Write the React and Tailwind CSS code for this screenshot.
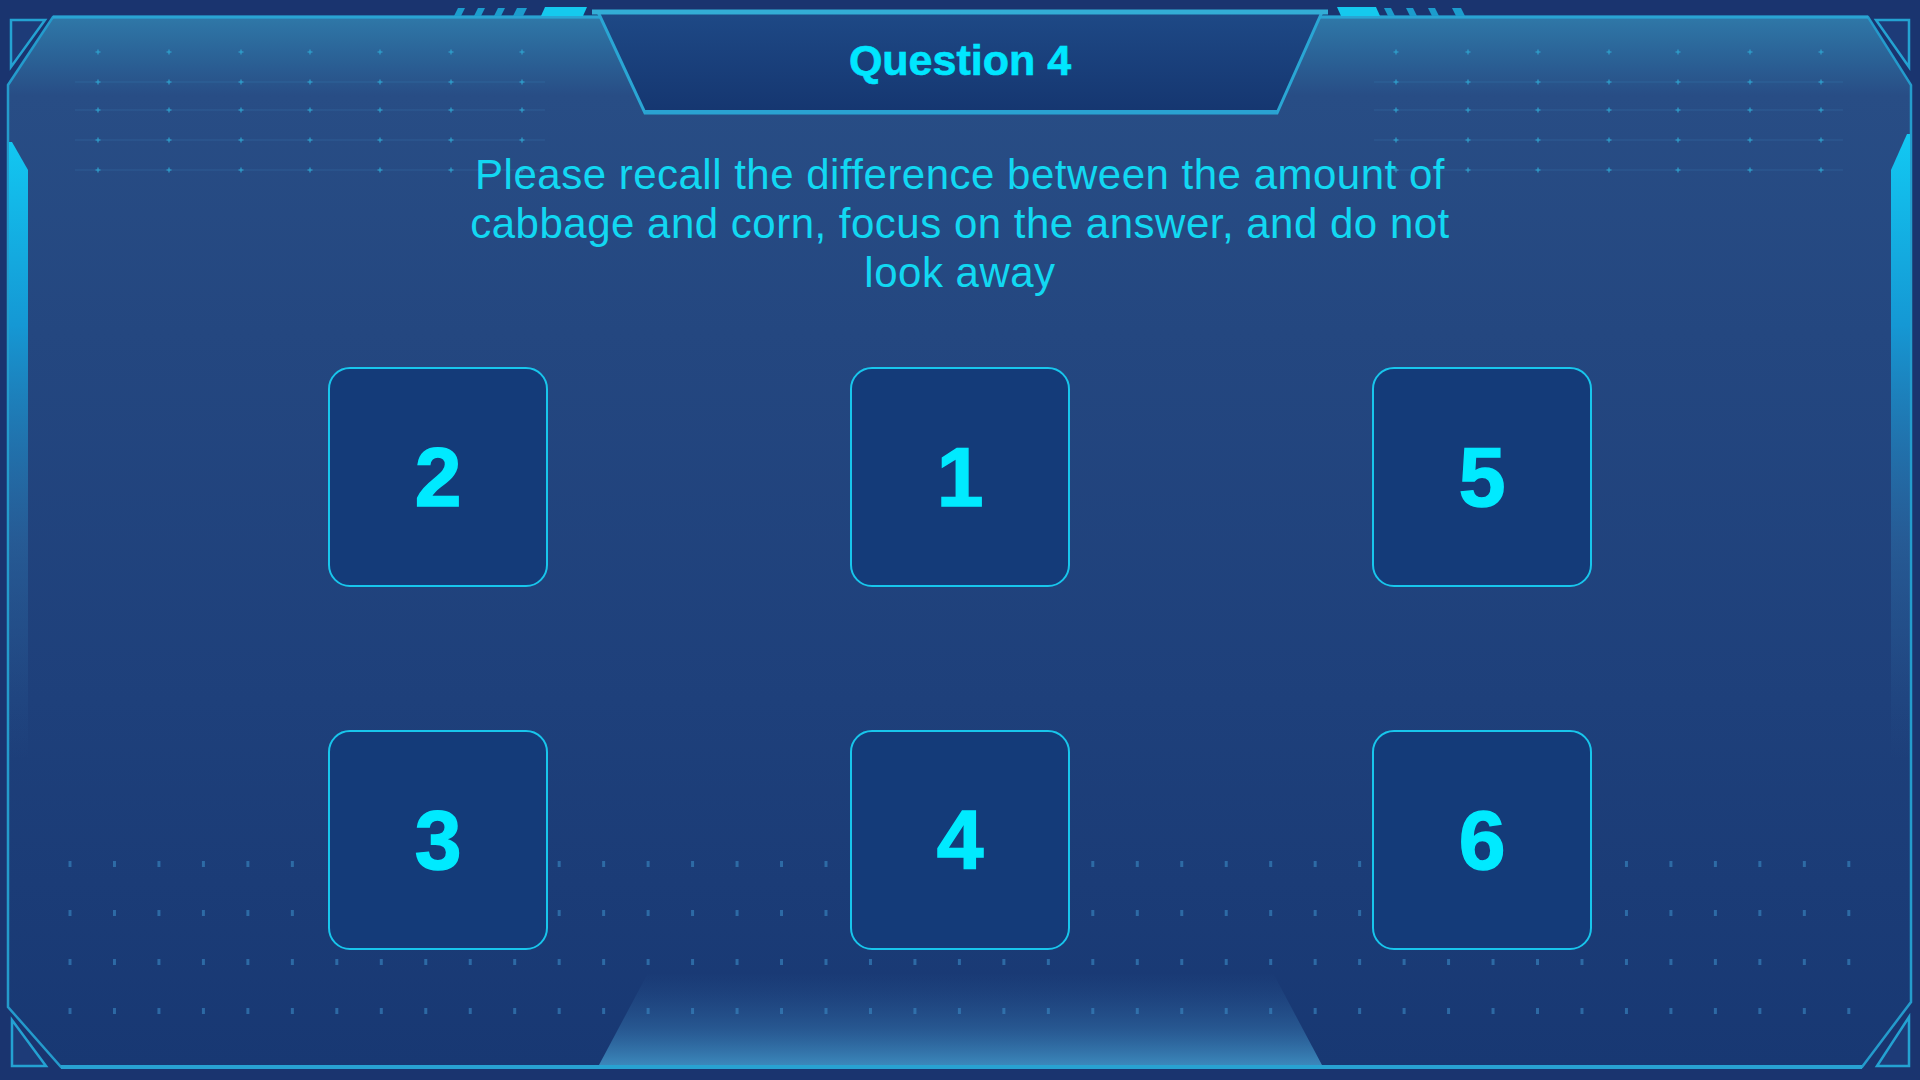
import React from "react";

function Frame() {
  const topRows = [52, 82, 110, 140, 170];
  const leftCols = [98, 169, 241, 310, 380, 451, 522];
  const rightCols = [1396, 1468, 1538, 1609, 1678, 1750, 1821];
  const botRows = [864, 913, 962, 1011];
  const botCols = Array.from({ length: 41 }, (_, i) => 70 + i * 44.47);

  return (
    <svg
      className="absolute inset-0 pointer-events-none"
      width="1920"
      height="1080"
      viewBox="0 0 1920 1080"
    >
      <defs>
        <linearGradient id="panelG" gradientUnits="userSpaceOnUse" x1="0" y1="17" x2="0" y2="1067">
          <stop offset="0" stopColor="#2f78a8" />
          <stop offset="0.035" stopColor="#2b6498" />
          <stop offset="0.075" stopColor="#284d85" />
          <stop offset="0.3" stopColor="#244780" />
          <stop offset="0.65" stopColor="#1e407b" />
          <stop offset="1" stopColor="#183873" />
        </linearGradient>
        <linearGradient id="headG" x1="0" y1="0" x2="0" y2="1">
          <stop offset="0" stopColor="#1e4986" />
          <stop offset="1" stopColor="#153670" />
        </linearGradient>
        <linearGradient id="leftBar" gradientUnits="userSpaceOnUse" x1="0" y1="138" x2="0" y2="760">
          <stop offset="0" stopColor="#12c8f2" />
          <stop offset="0.3" stopColor="#1598d4" />
          <stop offset="0.65" stopColor="#2a6aa4" stopOpacity="0.6" />
          <stop offset="1" stopColor="#2a5a95" stopOpacity="0" />
        </linearGradient>
        <linearGradient id="botTrap" x1="0" y1="0" x2="0" y2="1">
          <stop offset="0" stopColor="#2a5a95" stopOpacity="0" />
          <stop offset="0.6" stopColor="#3370a8" stopOpacity="0.55" />
          <stop offset="1" stopColor="#3d8cbf" stopOpacity="0.95" />
        </linearGradient>
      </defs>

      <rect x="0" y="0" width="1920" height="1080" fill="#1a346f" />

      {/* main panel */}
      <polygon
        points="53,17 1868,17 1911,85 1911,1002 1862,1067 61,1067 8,1007 8,85"
        fill="url(#panelG)"
        stroke="#249bcc"
        strokeWidth="2.5"
      />
      <line x1="61" y1="1067" x2="1862" y2="1067" stroke="#28a2d2" strokeWidth="4" />
      <line x1="53" y1="17" x2="1868" y2="17" stroke="#2aa4d3" strokeWidth="3" />

      {/* side glow bars */}
      <polygon points="9,142 12,142 28,170 28,760 9,760" fill="url(#leftBar)" />
      <polygon points="1910,134 1907,134 1891,170 1891,760 1910,760" fill="url(#leftBar)" />

      {/* corner triangles */}
      <polygon points="11,20 45,20 11,67" fill="#1d3b78" stroke="#24a2d2" strokeWidth="2.5" />
      <polygon points="1876,20 1909,20 1909,67" fill="#1d3b78" stroke="#24a2d2" strokeWidth="2.5" />
      <polygon points="12,1020 12,1066 46,1066" fill="#1d3b78" stroke="#24a2d2" strokeWidth="2.5" />
      <polygon points="1877,1066 1909,1066 1909,1017" fill="#1d3b78" stroke="#24a2d2" strokeWidth="2.5" />

      {/* top dot grids */}
      {topRows.map((y, ri) => (
        <g key={"tr" + y}>
          {ri > 0 && (
            <>
              <line x1="75" y1={y} x2="545" y2={y} stroke="#3a86bd" strokeOpacity="0.3" strokeWidth="1" />
              <line x1="1374" y1={y} x2="1843" y2={y} stroke="#3a86bd" strokeOpacity="0.3" strokeWidth="1" />
            </>
          )}
          {leftCols.concat(rightCols).map((x) => (
            <g key={x} stroke="#2fa6d2" strokeOpacity="0.55" strokeWidth="2">
              <line x1={x - 2.5} y1={y} x2={x + 2.5} y2={y} />
              <line x1={x} y1={y - 2.5} x2={x} y2={y + 2.5} />
            </g>
          ))}
        </g>
      ))}

      {/* bottom trapezoid */}
      <polygon points="648,973 1273,973 1322,1065 599,1065" fill="url(#botTrap)" />

      {/* bottom dots */}
      {botRows.map((y) =>
        botCols.map((x) => (
          <rect key={y + "-" + x} x={x - 1.5} y={y - 3} width="3" height="6" fill="#3a8ac4" fillOpacity="0.6" />
        ))
      )}

      {/* header trapezoid */}
      <polygon points="598,12 1322,12 1277,113 645,113" fill="url(#headG)" stroke="#2aa6d4" strokeWidth="3" />
      <line x1="592" y1="12" x2="1328" y2="12" stroke="#33add6" strokeWidth="5" />
      <line x1="645" y1="112" x2="1277" y2="112" stroke="#2aa2d2" strokeWidth="4" />

      {/* top stripes left */}
      <g fill="#1c9ccd">
        <polygon points="454,16 458,8 465,8 461,16" />
        <polygon points="474,16 478,8 485,8 481,16" />
        <polygon points="494,16 498,8 505,8 501,16" />
        <polygon points="513,16 517,8 527,8 523,16" />
      </g>
      <polygon points="541,16 545,7 587,7 583,16" fill="#15c9ee" />
      {/* top stripes right */}
      <polygon points="1337,7 1376,7 1380,16 1341,16" fill="#15c9ee" />
      <g fill="#1c9ccd">
        <polygon points="1384,8 1391,8 1395,16 1388,16" />
        <polygon points="1406,8 1413,8 1417,16 1410,16" />
        <polygon points="1428,8 1435,8 1439,16 1432,16" />
        <polygon points="1452,8 1461,8 1465,16 1456,16" />
      </g>
    </svg>
  );
}

const answers = ["2", "1", "5", "3", "4", "6"];

export default function App() {
  return (
    <div className="relative w-[1920px] h-[1080px] overflow-hidden bg-[#1a346f] font-['Liberation_Sans',Arial,sans-serif]">
      <Frame />
      <div className="relative z-10 flex flex-col items-center w-full">
        <div className="pt-[39px] text-[43px] leading-[43px] font-bold text-[#00e6ff] [-webkit-text-stroke:0.6px_#00e6ff]">
          Question 4
        </div>
        <p className="mt-[68px] w-[1010px] text-center text-[42px] leading-[49px] tracking-[0.5px] text-[#12d8f2]">
          Please recall the difference between the amount of cabbage and corn, focus on the answer, and do not look away
        </p>
        <div className="mt-[70px] grid grid-cols-[220px_220px_220px] gap-x-[302px] gap-y-[143px]">
          {answers.map((a) => (
            <button
              key={a}
              className="flex h-[220px] w-[220px] items-center justify-center rounded-[22px] border-2 border-[#18c6ec] bg-[#143b79] text-[84px] font-bold leading-none text-[#00eaff] [-webkit-text-stroke:1.5px_#00eaff]"
            >
              {a}
            </button>
          ))}
        </div>
      </div>
    </div>
  );
}
